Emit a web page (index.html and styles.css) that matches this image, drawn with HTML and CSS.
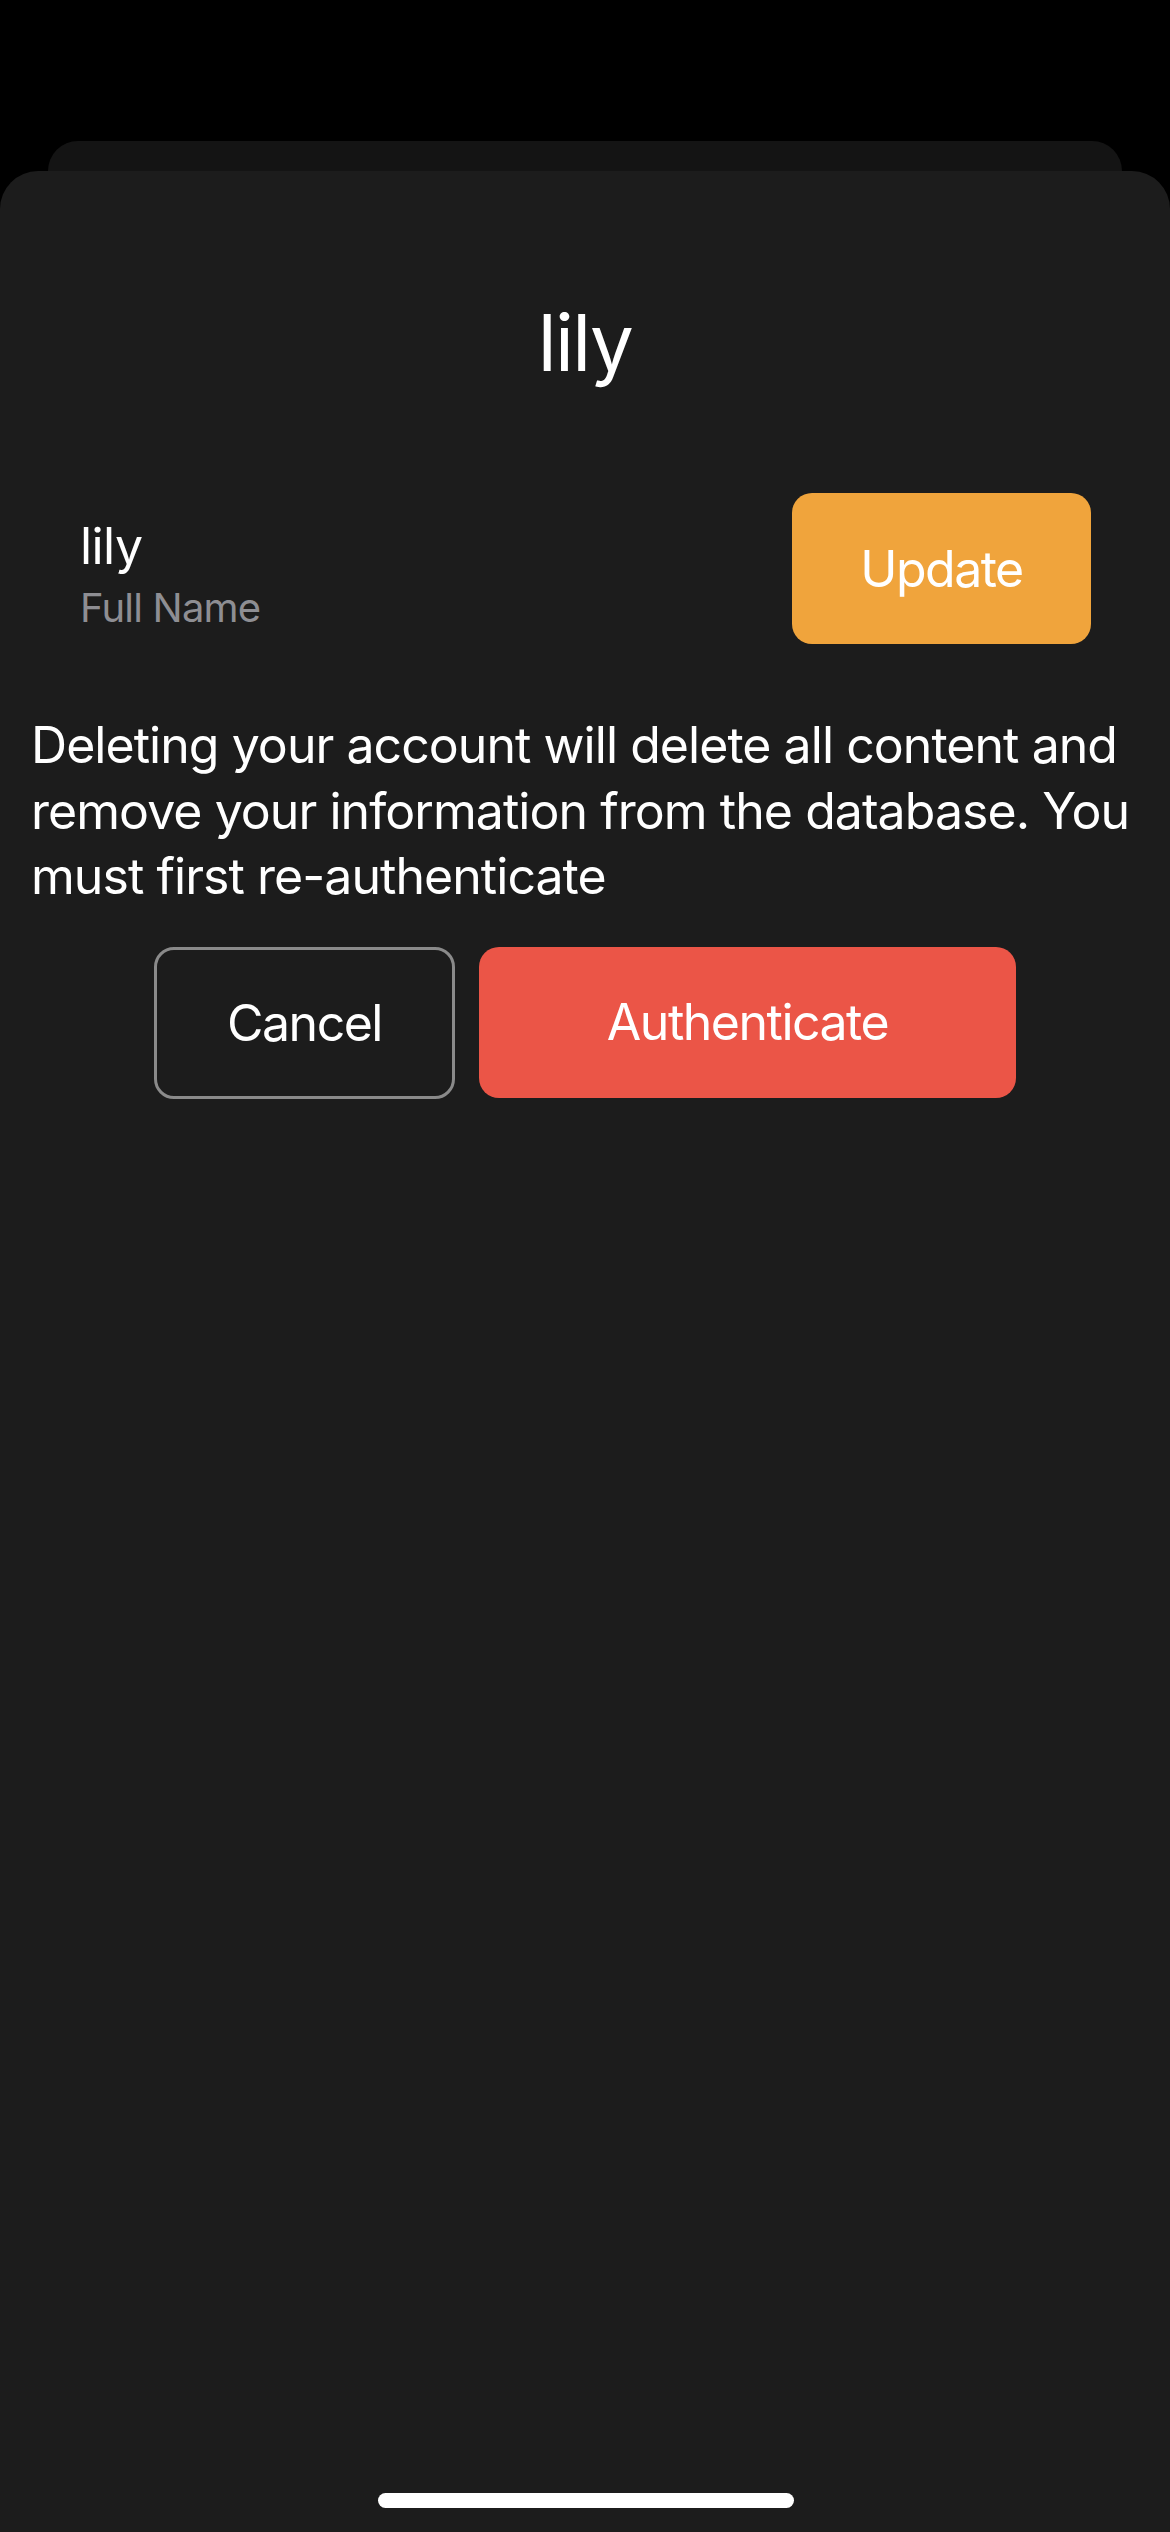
FILE: index.html
```html
<!DOCTYPE html>
<html lang="en">
<head>
<meta charset="utf-8">
<title>lily</title>
<link rel="stylesheet" href="styles.css">
</head>
<body>
<div class="screen">
  <div class="back-sheet"></div>
  <div class="sheet">
    <h1 class="title">lily</h1>
    <div class="name-row">
      <div class="name-block">
        <div class="name">lily</div>
        <div class="name-label">Full Name</div>
      </div>
      <button class="btn btn-update">Update</button>
    </div>
    <p class="warning">Deleting your account will delete all content and remove your information from the database. You must first re-authenticate</p>
    <div class="actions">
      <button class="btn btn-cancel">Cancel</button>
      <button class="btn btn-auth">Authenticate</button>
    </div>
    <div class="home-indicator"></div>
  </div>
</div>
</body>
</html>
```

FILE: styles.css
```css
html, body {
  margin: 0;
  padding: 0;
  background: #000;
}
body {
  width: 1170px;
  height: 2532px;
  overflow: hidden;
  font-family: Inter, "Noto Sans", "Liberation Sans", sans-serif;
  color: #fff;
  letter-spacing: -0.035em;
}
.screen {
  padding-top: 141px;
  display: flex;
  flex-direction: column;
  height: 2532px;
  box-sizing: border-box;
}
.back-sheet {
  margin: 0 48px;
  height: 30px;
  background: #141414;
  border-radius: 38px 38px 0 0;
}
.sheet {
  flex: 1;
  background: #1c1c1c;
  border-radius: 38px 38px 0 0;
  padding-top: 133px;
  display: flex;
  flex-direction: column;
  position: relative;
}
.title {
  margin: 0;
  font-size: 78px;
  line-height: 1;
  font-weight: 400;
  text-align: center;
  letter-spacing: -0.02em;
}
.name-row {
  margin-top: 111px;
  padding: 0 79px 0 80px;
  display: flex;
  justify-content: space-between;
  align-items: flex-start;
}
.name-block {
  margin-top: 24px;
}
.name {
  font-size: 50px;
  line-height: 58px;
}
.name-label {
  margin-top: 10px;
  font-size: 40px;
  line-height: 46px;
  color: #8e8e93;
  letter-spacing: -0.02em;
}
.btn {
  font-family: inherit;
  font-size: 50px;
  letter-spacing: -0.03em;
  color: #fff;
  border: none;
  border-radius: 20px;
  height: 151px;
  padding: 0;
  display: flex;
  align-items: center;
  justify-content: center;
}
.btn-update {
  width: 299px;
  background: #f0a43c;
}
.warning {
  margin: 69px 0 0;
  padding: 0 31px;
  font-size: 50px;
  line-height: 65.5px;
  letter-spacing: -0.019em;
}
.actions {
  margin-top: 37px;
  display: flex;
  justify-content: center;
  gap: 24px;
}
.btn-cancel {
  width: 301px;
  height: 152px;
  background: transparent;
  border: 3px solid #8a8a8a;
}
.btn-auth {
  width: 537px;
  background: #eb5547;
}
.home-indicator {
  position: absolute;
  left: 378px;
  bottom: 24px;
  width: 416px;
  height: 15px;
  border-radius: 8px;
  background: #fff;
}
```
